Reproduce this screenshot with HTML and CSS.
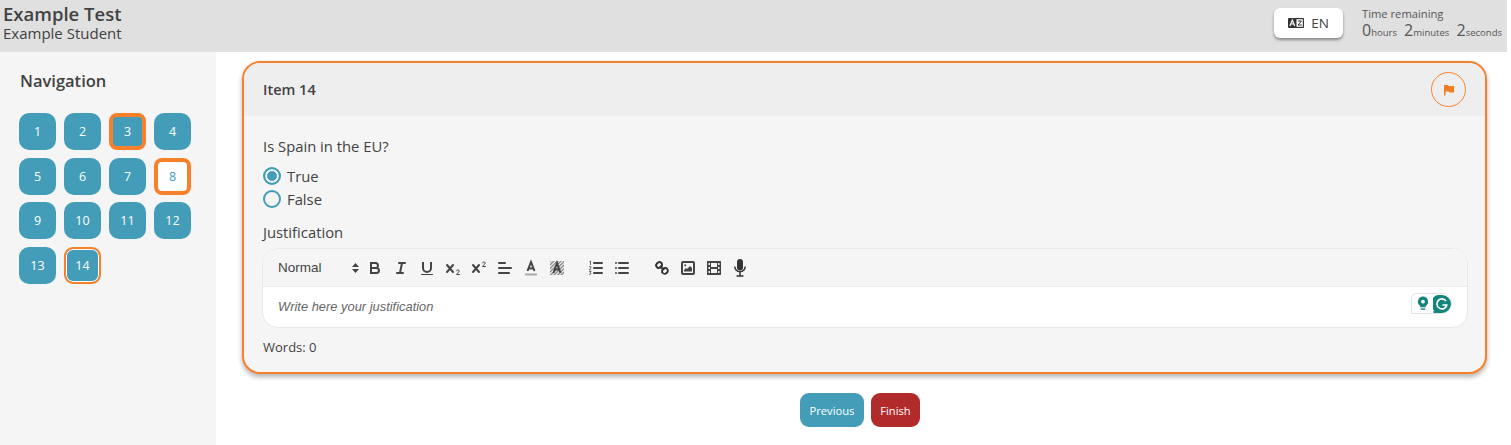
FILE: index.html
```html
<!DOCTYPE html>
<html lang="en">
<head>
    <meta charset="UTF-8">
    <title>Example Test</title>
    <link rel="stylesheet" href="styles.css">
</head>
<body>
    <div class="page">
        <header class="topbar">
            <div class="test-info">
                <h1>Example Test</h1>
                <p>Example Student</p>
            </div>
            <div class="topbar-right">
                <button class="lang-btn">
                    <svg width="16" height="10" viewBox="0 0 16 10"><rect width="16" height="10" rx="1" fill="#333"/><rect x="8.500" y="1.200" width="6.300" height="7.600" fill="#fff"/><path d="M1.900 8 4.300 2 6.700 8M2.900 6H5.700" fill="none" stroke="#fff" stroke-width="1.200"/><path d="M10 3h3.500L10 7h3.700" fill="none" stroke="#333"/></svg>
                    <span>EN</span>
                </button>
                <div class="timer">
                    <div class="timer-label">Time remaining</div>
                    <div class="timer-values">
                        <span><b>0</b>hours</span>
                        <span><b>2</b>minutes</span>
                        <span><b>2</b>seconds</span>
                    </div>
                </div>
            </div>
        </header>

        <div class="layout">
            <aside class="sidebar">
                <h2>Navigation</h2>
                <div class="nav-grid">
                    <button class="nav-btn">1</button>
                    <button class="nav-btn">2</button>
                    <button class="nav-btn flagged">3</button>
                    <button class="nav-btn">4</button>
                    <button class="nav-btn">5</button>
                    <button class="nav-btn">6</button>
                    <button class="nav-btn">7</button>
                    <button class="nav-btn flagged empty">8</button>
                    <button class="nav-btn">9</button>
                    <button class="nav-btn">10</button>
                    <button class="nav-btn">11</button>
                    <button class="nav-btn">12</button>
                    <button class="nav-btn">13</button>
                    <button class="nav-btn current">14</button>
                </div>
            </aside>

            <main class="content">
                <section class="item-card">
                    <div class="item-head">
                        <h3>Item 14</h3>
                        <button class="flag-btn">
                            <svg width="12" height="12" viewBox="0 0 12 12"><path d="M1 1h4l.5 1H11v6.500H6.500L6 7.500H2.500V11.500H1z" fill="#f47c20"/></svg>
                        </button>
                    </div>
                    <div class="item-body">
                        <p class="question">Is Spain in the EU?</p>
                        <label class="radio-row"><span class="radio checked"></span>True</label>
                        <label class="radio-row"><span class="radio"></span>False</label>
                        <p class="editor-label">Justification</p>
                        <div class="editor">
                            <div class="toolbar">
                                <span class="format-select">Normal
                                    <svg width="7" height="10" viewBox="0 0 7 10"><path d="M3.500 0 7 4H0zM3.500 10 0 6h7z" fill="#444"/></svg>
                                </span>
                                <div class="tool-group">
                                    <svg class="tool" viewBox="0 0 18 18"><path d="M5 4h4.500a2.500 2.500 0 0 1 0 5H5zM5 9h5.500a2.500 2.500 0 0 1 0 5H5z" fill="none" stroke="#444" stroke-width="2"/></svg>
                                    <svg class="tool" viewBox="0 0 18 18"><path d="M7 4h6M5 14h6M8 14l2-10" fill="none" stroke="#444" stroke-width="2" stroke-linecap="round"/></svg>
                                    <svg class="tool" viewBox="0 0 18 18"><path d="M5 3v6a4 4 0 0 0 8 0V3" fill="none" stroke="#444" stroke-width="2"/><rect x="3" y="15" width="12" height="1" rx=".5" fill="#444"/></svg>
                                    <svg class="tool" viewBox="0 0 18 18"><path d="M3 6l6 7M9 6l-6 7" stroke="#444" stroke-width="2" stroke-linecap="round"/><path d="M12.500 11.800c.4-1.300 2.700-1.200 2.700.3 0 1.300-2.700 2.300-2.700 3.400h3" fill="none" stroke="#444" stroke-linecap="round"/></svg>
                                    <svg class="tool" viewBox="0 0 18 18"><path d="M3 6l6 7M9 6l-6 7" stroke="#444" stroke-width="2" stroke-linecap="round"/><path d="M12.500 3.800c.4-1.300 2.700-1.200 2.700.3 0 1.300-2.700 2.300-2.700 3.400h3" fill="none" stroke="#444" stroke-linecap="round"/></svg>
                                    <svg class="tool" viewBox="0 0 18 18"><path d="M3 4h6M3 9h12M3 14h10" stroke="#444" stroke-width="2" stroke-linecap="round"/></svg>
                                    <svg class="tool" viewBox="0 0 18 18"><path d="M5.500 12 9 3l3.500 9M6.700 9.500h4.600" fill="none" stroke="#444" stroke-width="2"/><rect x="3" y="14.500" width="12" height="2" fill="#aaa"/></svg>
                                    <svg class="tool" viewBox="0 0 18 18"><defs><pattern id="hatch" width="2.500" height="2.500" patternUnits="userSpaceOnUse" patternTransform="rotate(45)"><rect width="1.200" height="2.500" fill="#777"/></pattern></defs><rect x="2" y="2" width="14" height="14" fill="url(#hatch)"/><path d="M5.500 14 9 4l3.500 10M6.700 10.500h4.600" fill="none" stroke="#444" stroke-width="2"/></svg>
                                </div>
                                <div class="tool-group lists">
                                    <svg class="tool" viewBox="0 0 18 18"><path d="M7 4h8M7 9h8M7 14h8" stroke="#444" stroke-width="2" stroke-linecap="round"/><path d="M2.500 2.500 3.500 2v4M2 8c.6-.9 2.200-.6 2 .4C3.800 9.300 2.200 10 2.200 10.800H4.200M2.200 12.500h1.900L3 13.800c1.400 0 1.400 2-1 1.500" fill="none" stroke="#444" stroke-width=".8"/></svg>
                                    <svg class="tool" viewBox="0 0 18 18"><path d="M6 4h9M6 9h9M6 14h9" stroke="#444" stroke-width="2" stroke-linecap="round"/><path d="M3 4h.01M3 9h.01M3 14h.01" stroke="#444" stroke-width="2" stroke-linecap="round"/></svg>
                                </div>
                                <div class="tool-group">
                                    <svg class="tool" viewBox="0 0 18 18"><path d="M7 7l4 4" stroke="#333" stroke-width="2"/><path d="M8.900 4.600a3.500 3.500 0 0 1-4.300 4.300C3.200 7.500 2 6.400 4.200 4.200S7.500 3.200 8.900 4.600zM13.400 9.100a3.500 3.500 0 0 0-4.300 4.300c1.400 1.400 2.500 2.500 4.700.4s1-2.900-.4-4.700z" fill="none" stroke="#333" stroke-width="2"/></svg>
                                    <svg class="tool" viewBox="0 0 18 18"><rect x="3" y="3" width="12" height="12" rx="1" fill="none" stroke="#444" stroke-width="2"/><path d="M5 12.500v-1.500l2-2 1 1 3-3 2 2v3.500z" fill="#444"/><circle cx="6.200" cy="6.200" r="1" fill="#444"/></svg>
                                    <svg class="tool" viewBox="0 0 18 18"><path fill-rule="evenodd" d="M2.500 2h13a.5.5 0 0 1 .5.500v13a.5.500 0 0 1-.5.500h-13a.5.500 0 0 1-.5-.500v-13a.5.500 0 0 1 .5-.500zM6 4v4h6V4zM6 10v4h6v-4zM3.500 4v2H5V4zM3.500 8v2H5V8zM3.500 12v2H5v-2zM13 4v2h1.500V4zM13 8v2h1.500V8zM13 12v2h1.500v-2z" fill="#444"/></svg>
                                    <svg class="tool" viewBox="0 0 18 18"><rect x="6" y="0" width="6" height="11.500" rx="3" fill="#333"/><path d="M3.800 7.500a5.200 5.200 0 0 0 10.400 0M9 13v3.500M5.500 17h7" fill="none" stroke="#333" stroke-width="1.500"/></svg>
                                </div>
                            </div>
                            <div class="editor-area">
                                <span>Write here your justification</span>
                                <div class="grammar-badge">
                                    <svg width="12" height="15" viewBox="0 0 13 15"><path d="M6.500 0a5.500 5.500 0 0 1 3 10.100V11.500h-6V10.100A5.500 5.500 0 0 1 6.500 0z" fill="#15847a"/><circle cx="6.500" cy="5.500" r="2" fill="#fff"/><rect x="4" y="12.800" width="5" height="1.500" fill="#15847a"/></svg>
                                    <svg width="18" height="18" viewBox="0 0 18 18"><path d="M9 0a9 9 0 0 1 0 18H1.500C0 18 0 17 1 15.500A9 9 0 0 1 9 0z" fill="#15847a"/><path d="M13 6a5 5 0 1 0 .8 4H9.500" fill="none" stroke="#fff" stroke-width="1.600"/></svg>
                                </div>
                            </div>
                        </div>
                        <p class="word-count">Words: 0</p>
                    </div>
                </section>
                <div class="pager">
                    <button class="btn-prev">Previous</button>
                    <button class="btn-finish">Finish</button>
                </div>
            </main>
        </div>
    </div>
</body>
</html>
```

FILE: styles.css
```css
/* Global Styles */
:root {
    --teal: #439db8;
    --orange: #f9802a;
    --text: #424242;
}

* {
    margin: 0;
    padding: 0;
    box-sizing: border-box;
}

html, body {
    height: 100%;
    overflow: hidden;
}

body {
    font-family: "Open Sans", sans-serif;
    color: var(--text);
    background: #fff;
}

button {
    font-family: inherit;
    border: none;
}

.page {
    width: 1507px;
    height: 445px;
    display: flex;
    flex-direction: column;
}

/* Top bar */
.topbar {
    height: 52px;
    flex: none;
    background: #e0e0e0;
    display: flex;
    justify-content: space-between;
    padding: 3px 5px 0 3px;
}

.test-info h1 {
    font-size: 18.500px;
    line-height: 22px;
    font-weight: 600;
}

.test-info p {
    font-size: 15px;
    line-height: 17px;
}

.topbar-right {
    display: flex;
    align-items: flex-start;
    gap: 19px;
}

.lang-btn {
    width: 69px;
    height: 30px;
    margin-top: 5px;
    background: #fff;
    border-radius: 6px;
    box-shadow: 0 2px 3px rgba(0, 0, 0, 0.4);
    display: flex;
    align-items: center;
    justify-content: center;
    gap: 7px;
    font-size: 13.500px;
    color: var(--text);
}

.timer {
    width: 140px;
    font-size: 11.200px;
    color: #555;
    line-height: 14px;
    padding-top: 4px;
}

.timer-values {
    display: flex;
    justify-content: space-between;
    font-size: 9.500px;
    line-height: 18px;
}

.timer-values b {
    font-size: 16px;
    font-weight: 400;
}

/* Layout */
.layout {
    flex: 1;
    display: flex;
    min-height: 0;
}

.sidebar {
    width: 216px;
    flex: none;
    background: #f5f5f5;
    padding: 19px 19px;
}

.sidebar h2 {
    font-size: 16.500px;
    line-height: 20px;
    font-weight: 600;
    margin-left: 1px;
    margin-bottom: 22px;
}

.nav-grid {
    display: grid;
    grid-template-columns: repeat(4, 37px);
    column-gap: 8px;
    row-gap: 7.600px;
}

.nav-btn {
    height: 37px;
    background: var(--teal);
    color: #fff;
    border-radius: 10px;
    font-size: 12.500px;
}

.nav-btn.flagged {
    border: 4px solid var(--orange);
    border-radius: 8px;
}

.nav-btn.empty {
    background: #fff;
    color: var(--teal);
}

.nav-btn.current {
    border: 2px solid var(--orange);
    box-shadow: inset 0 0 0 1px #fff;
    border-radius: 9px;
}

/* Item card */
.content {
    flex: 1;
    padding: 9px 20px 0 26px;
}

.item-card {
    height: 313px;
    background: #f5f5f5;
    border: 2px solid var(--orange);
    border-radius: 18px;
    box-shadow: 0 3px 5px rgba(0, 0, 0, 0.3);
    overflow: hidden;
}

.item-head {
    height: 53px;
    background: #eeeeee;
    display: flex;
    align-items: center;
    justify-content: space-between;
    padding: 0 19px;
}

.item-head h3 {
    font-size: 14.500px;
    font-weight: 600;
}

.flag-btn {
    width: 35px;
    height: 35px;
    border: 1.500px solid var(--orange);
    border-radius: 50%;
    background: transparent;
    display: flex;
    align-items: center;
    justify-content: center;
}

.item-body {
    padding: 20px 19px 0;
    font-size: 14.800px;
}

.question {
    line-height: 20px;
    margin-bottom: 8px;
}

.radio-row {
    display: flex;
    align-items: center;
    gap: 6px;
    height: 23px;
}

.radio {
    width: 18px;
    height: 18px;
    border: 2px solid var(--teal);
    border-radius: 50%;
}

.radio.checked {
    background: var(--teal);
    box-shadow: inset 0 0 0 2px #f5f5f5;
}

.editor-label {
    line-height: 20px;
    margin-top: 12px;
    margin-bottom: 6px;
}

/* Editor */
.editor {
    margin: 0 -2px 0 -1px;
    border: 1px solid #e8e8e8;
    border-radius: 16px;
    overflow: hidden;
    background: #fff;
}

.toolbar {
    height: 38px;
    background: #f5f5f5;
    border-bottom: 1px solid #eee;
    display: flex;
    align-items: center;
    padding-left: 15px;
    font-family: "Liberation Sans", sans-serif;
}

.format-select {
    width: 88px;
    flex: none;
    font-size: 13.500px;
    color: #444;
    display: flex;
    align-items: center;
    justify-content: space-between;
    padding-right: 7px;
}

.tool-group {
    display: flex;
    gap: 8px;
    margin-right: 21px;
}

.tool-group.lists {
    margin-right: 22px;
}

.tool {
    width: 18px;
    height: 18px;
}

.editor-area {
    height: 40px;
    display: flex;
    align-items: center;
    justify-content: space-between;
    padding: 0 15px 2px;
    font-family: "Liberation Sans", sans-serif;
    font-size: 12.900px;
    font-style: italic;
    color: #666;
}

.grammar-badge {
    display: flex;
    align-items: center;
    gap: 4px;
    width: 41px;
    height: 21px;
    padding-left: 5px;
    margin-bottom: 5px;
    border: 1px solid #e3e3e3;
    border-radius: 6px 11px 11px 0;
}

.word-count {
    font-size: 13px;
    margin-top: 10px;
}

/* Pager */
.pager {
    display: flex;
    justify-content: center;
    gap: 7px;
    margin-top: 19px;
    padding-right: 9px;
}

.pager button {
    height: 34px;
    border-radius: 9px;
    color: #fff;
    font-size: 11.200px;
}

.btn-prev {
    width: 64px;
    background: var(--teal);
}

.btn-finish {
    width: 49px;
    background: #b22b2b;
}
```
